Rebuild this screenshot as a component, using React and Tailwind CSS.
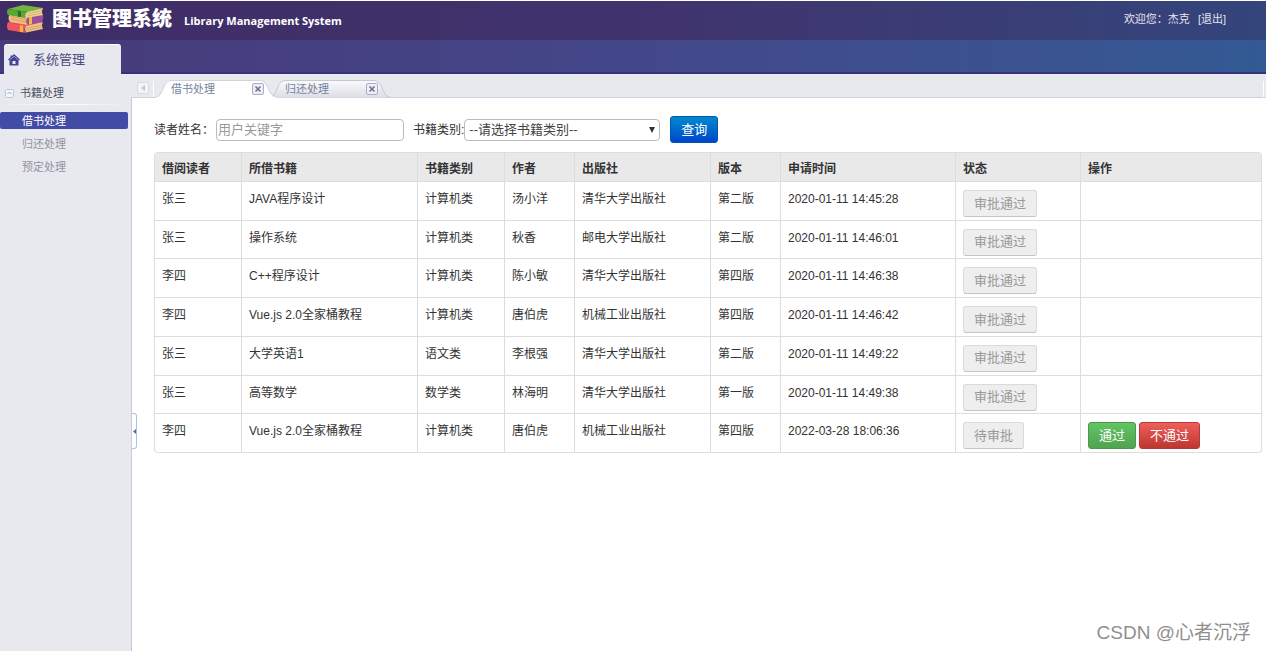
import React from 'react';

const rows = [
  ['张三', 'JAVA程序设计', '计算机类', '汤小洋', '清华大学出版社', '第二版', '2020-01-11 14:45:28', '审批通过'],
  ['张三', '操作系统', '计算机类', '秋香', '邮电大学出版社', '第二版', '2020-01-11 14:46:01', '审批通过'],
  ['李四', 'C++程序设计', '计算机类', '陈小敏', '清华大学出版社', '第四版', '2020-01-11 14:46:38', '审批通过'],
  ['李四', 'Vue.js 2.0全家桶教程', '计算机类', '唐伯虎', '机械工业出版社', '第四版', '2020-01-11 14:46:42', '审批通过'],
  ['张三', '大学英语1', '语文类', '李根强', '清华大学出版社', '第二版', '2020-01-11 14:49:22', '审批通过'],
  ['张三', '高等数学', '数学类', '林海明', '清华大学出版社', '第一版', '2020-01-11 14:49:38', '审批通过'],
  ['李四', 'Vue.js 2.0全家桶教程', '计算机类', '唐伯虎', '机械工业出版社', '第四版', '2022-03-28 18:06:36', '待审批'],
];

const columns = ['借阅读者', '所借书籍', '书籍类别', '作者', '出版社', '版本', '申请时间', '状态', '操作'];
const widths = ['w-[87px]', 'w-[176px]', 'w-[87px]', 'w-[70px]', 'w-[136px]', 'w-[70px]', 'w-[175px]', 'w-[125px]', ''];

function BooksLogo() {
  return (
    <svg className="h-7 w-[39px] shrink-0" viewBox="0 0 39 28" aria-hidden="true">
      <path d="M2 17 L17 13 L37 18 L22 22Z" fill="#f0525a" />
      <path d="M2 17 Q0 21 2 25 L20 28 Q17 25 20 21Z" fill="#ee5560" />
      <path d="M20 21 L37 17 Q35 20 37 24 L20 27.500 Q18 24 20 21Z" fill="#eec187" />
      <path d="M20 23.500 L36 20 M20 25.500 L36 22" stroke="#c99757" strokeWidth=".6" />
      <path d="M14 20 L17 20.600 L17 27.300 L13.500 26.600Z" fill="#f6b73c" />
      <path d="M3 9 L20 7 L37 10 L22 14Z" fill="#a95cab" />
      <path d="M4 9 Q1 13 4 17 L22 20 Q19 17 22 13Z" fill="#eebf7c" />
      <path d="M5 11.500 L20 14.500 M5 14 L20 17" stroke="#c99757" strokeWidth=".7" />
      <path d="M21 13 L37 9 Q38 13 36 17 L22 20 Q19 17 21 13Z" fill="#9b4f9f" />
      <path d="M23 12.600 L26 11.800 L26 19 L23 19.700Z" fill="#f6b73c" />
      <path d="M2 4 L17 0 L37 3 L22 7Z" fill="#70b83c" />
      <path d="M2 4 Q0 7 2 10 L20 13 Q18 10 21 7Z" fill="#58a832" />
      <path d="M21 7 L37 3 Q35 7 37 10 L20 13 Q18 10 21 7Z" fill="#efd092" />
      <path d="M21 9 L36 5.500 M21 11 L36 8" stroke="#c9a45f" strokeWidth=".6" />
      <path d="M12 6 L15 6.500 L15 12 L12 11.500Z" fill="#246d2c" />
    </svg>
  );
}

function HomeIcon() {
  return (
    <svg className="h-3 w-3 shrink-0" viewBox="0 0 12 12" aria-hidden="true">
      <path d="M6 0 L12 5.500 L10.500 6.800 V11.500 H1.500 V6.800 L0 5.500 L2.500 3.200 V1.500 H4 V2Z" fill="#43439a" />
      <path d="M1.500 6 L6 2.200 L10.500 6" fill="none" stroke="#b9bbdc" strokeWidth=".7" />
      <rect x="4.500" y="7" width="3" height="3" fill="#e8e9ef" />
    </svg>
  );
}

function Tab({ title, active }) {
  return (
    <div className={'relative -ml-px flex h-[17px] w-[115px] items-center justify-between pl-3 pr-[10px] ' + (active ? 'z-10' : '')}>
      <svg className="absolute inset-0 h-[18px] w-full overflow-visible" viewBox="0 0 115 18" preserveAspectRatio="none" aria-hidden="true">
        <defs>
          <linearGradient id="idleTab" x1="0" y1="0" x2="0" y2="1">
            <stop offset="0" stopColor="#fbfbfc" />
            <stop offset="1" stopColor="#dcdde7" />
          </linearGradient>
        </defs>
        <path
          d="M-4 17.500 C5 17.500 3 .5 12 .5 H101 C110 .5 109 17.500 118 17.500"
          fill={active ? '#ffffff' : 'url(#idleTab)'}
          stroke={active ? '#d2d3df' : '#c6c7d6'}
        />
        {active && <path d="M-3 17.500 H117" stroke="#fff" strokeWidth="1" />}
      </svg>
      <button type="button" className="relative text-[11px] leading-4 text-[#75849b]">{title}</button>
      <button type="button" aria-label={'关闭' + title} className="relative flex h-3 w-3 items-center justify-center rounded-[2px] border border-[#a9acc4] bg-[#eeeff6]">
        <svg className="h-2 w-2" viewBox="0 0 8 8" aria-hidden="true">
          <path d="M1.500 1.500 L6.500 6.500 M6.500 1.500 L1.500 6.500" stroke="#686d8c" strokeWidth="1.500" />
        </svg>
      </button>
    </div>
  );
}

const cell = 'border-b border-r border-[#dddddd] px-[7px] text-left align-top';
const btn = 'inline-flex h-[27px] items-center rounded-[3px] border px-[10px] text-[13px] leading-5';

export default function App() {
  return (
    <div className="flex min-h-screen flex-col bg-white pt-px font-['Liberation_Sans','Noto_Sans_CJK_SC',sans-serif] text-xs text-[#333]">
      <header className="flex h-[39px] items-center justify-between bg-linear-to-r from-[#3f2c66] via-[#40336d] to-[#33457c] pb-[3px] pl-[6px] pr-10 text-white">
        <div className="flex items-center">
          <BooksLogo />
          <h1 className="ml-[7px] text-xl leading-7 font-black">图书管理系统</h1>
          <span className="ml-3 pt-1 font-['Open_Sans',sans-serif] text-[11px] leading-4 font-bold">Library Management System</span>
        </div>
        <div className="flex gap-2 text-[11px] leading-4 text-[#e6e6ee]">
          <span>欢迎您：杰克</span>
          <a href="#logout">[退出]</a>
        </div>
      </header>

      <nav className="flex h-[34px] items-end border-b-2 border-[#34347a] bg-linear-to-r from-[#473a78] via-[#43478a] to-[#335a94] px-1">
        <a href="#system" className="relative -mb-[2px] flex h-[30px] w-[117px] items-center rounded-t-[3px] border-t border-white bg-[#e8e9ef] pl-1 text-[13px] leading-4 text-[#484b82]">
          <HomeIcon />
          <span className="ml-[13px]">系统管理</span>
        </a>
      </nav>

      <div className="flex flex-1 bg-[#e8e9ee]">
        <aside className="w-[131px] shrink-0 pr-[3px] pt-[10px] text-[11px] leading-4">
          <button type="button" className="flex h-[18px] w-full items-center gap-[6px] pl-[5px] text-[#4b5160]">
            <svg className="h-[9px] w-[9px]" viewBox="0 0 9 9" aria-hidden="true">
              <rect x=".5" y=".5" width="8" height="8" rx="1" fill="#f2f6fa" stroke="#b4c8da" />
              <path d="M2.500 5 L4.500 3 L6.500 5" fill="none" stroke="#9db2c6" />
            </svg>
            书籍处理
          </button>
          <div className="mt-[2px] h-px bg-linear-to-r from-[#e8e9ee] via-white to-[#e8e9ee]" />
          <ul className="mt-[7px]">
            <li><a href="#borrow" className="mb-[6px] flex h-[17px] items-center rounded-[2px] bg-[#434ca5] pl-[22px] text-white">借书处理</a></li>
            <li><a href="#return" className="mb-[6px] flex h-[17px] items-center pl-[22px] text-[#9293a2]">归还处理</a></li>
            <li><a href="#reserve" className="flex h-[17px] items-center pl-[22px] text-[#9293a2]">预定处理</a></li>
          </ul>
        </aside>

        <div className="flex min-w-0 flex-1 flex-col">
          <div className="flex h-6 items-end border-b border-[#d0d1dd] pl-[6px]">
            <button type="button" aria-label="向左滚动" className="mb-[3px] flex h-3 w-3 items-center justify-center rounded-[2px] border border-[#d9dae0] bg-[#f4f4f7]">
              <svg className="h-[6px] w-1" viewBox="0 0 4 6" aria-hidden="true"><path d="M4 0 V6 L0 3Z" fill="#c3c5cf" /></svg>
            </button>
            <span className="ml-1 mr-[6px] h-4 w-px bg-white" />
            <Tab title="借书处理" active />
            <Tab title="归还处理" />
            <span className="ml-auto mr-[2px] h-4 w-px bg-white" />
          </div>

          <main className="relative flex-1 border-l border-[#c9cad8] bg-white pl-[22px] pr-1 pt-[18px]">
            <button type="button" aria-label="收起菜单" className="absolute left-0 top-[57%] flex h-9 w-[5px] items-center justify-center rounded-r-[3px] border border-l-0 border-[#a9c3e6] bg-white">
              <svg className="h-[5px] w-[3px]" viewBox="0 0 3 5" aria-hidden="true"><path d="M3 0 V5 L0 2.500Z" fill="#4a6ea5" /></svg>
            </button>

            <form className="flex h-[27px] items-center" onSubmit={(e) => e.preventDefault()}>
              <label htmlFor="reader" className="w-[62px] leading-5">读者姓名：</label>
              <input id="reader" type="text" placeholder="用户关键字" className="h-[22px] w-[188px] rounded-[4px] border border-[#bbb] bg-white px-px text-[13px] placeholder:text-[#999]" />
              <label htmlFor="category" className="ml-[9px] leading-5">书籍类别:</label>
              <div className="relative">
                <select id="category" className="block h-[22px] w-[196px] appearance-none rounded-[4px] border border-[#bbb] bg-white pl-1 pr-5 text-[13px] leading-5 text-[#444]">
                  <option>--请选择书籍类别--</option>
                  <option>计算机类</option>
                  <option>语文类</option>
                  <option>数学类</option>
                </select>
                <svg className="pointer-events-none absolute right-[5px] top-2 h-[6px] w-[6px]" viewBox="0 0 6 6" aria-hidden="true"><path d="M0 0 H6 L3 6Z" fill="#333" /></svg>
              </div>
              <button type="submit" className={btn + ' ml-[10px] border-[#0055b3] bg-linear-to-b from-[#0088cc] to-[#0044cc] text-white'}>查询</button>
            </form>

            <table className="mt-[9px] h-[301px] w-full table-fixed border-separate border-spacing-0 rounded-[4px] border-l border-t border-[#dddddd] leading-[18px]">
              <thead>
                <tr className="h-[29px]">
                  {columns.map((c, i) => (
                    <th key={c} className={cell + ' h-[29px] bg-[#e9e9e9] pt-[7px] font-bold first:rounded-tl-[4px] last:rounded-tr-[4px] ' + widths[i]}>{c}</th>
                  ))}
                </tr>
              </thead>
              <tbody>
                {rows.map((r, n) => (
                  <tr key={n} className="group">
                    {r.slice(0, 7).map((v, i) => (
                      <td key={i} className={cell + ' whitespace-nowrap pt-[8px] group-last:first:rounded-bl-[4px]'}>{v}</td>
                    ))}
                    <td className={cell + ' pt-[8px] leading-none'}>
                      <button type="button" disabled className={btn + ' border-[#dadada] border-b-[#c4c4c4] bg-[#eeeeee] text-[#999]'}>{r[7]}</button>
                    </td>
                    <td className={cell + ' group-last:rounded-br-[4px]'}>
                      {r[7] === '待审批' && (
                        <div className="flex gap-[3px] pt-[8px]">
                          <button type="button" className={btn + ' border-[#489a48] bg-linear-to-b from-[#62c462] to-[#51a351] text-white'}>通过</button>
                          <button type="button" className={btn + ' border-[#b53a35] bg-linear-to-b from-[#ee5f5b] to-[#bd362f] text-white'}>不通过</button>
                        </div>
                      )}
                    </td>
                  </tr>
                ))}
              </tbody>
            </table>

            <div className="absolute bottom-1 right-[15px] text-[19px] leading-7 text-[#8f8f8f] [text-shadow:-1px_-1px_0_#fff]">CSDN @心者沉浮</div>
          </main>
        </div>
      </div>
    </div>
  );
}
